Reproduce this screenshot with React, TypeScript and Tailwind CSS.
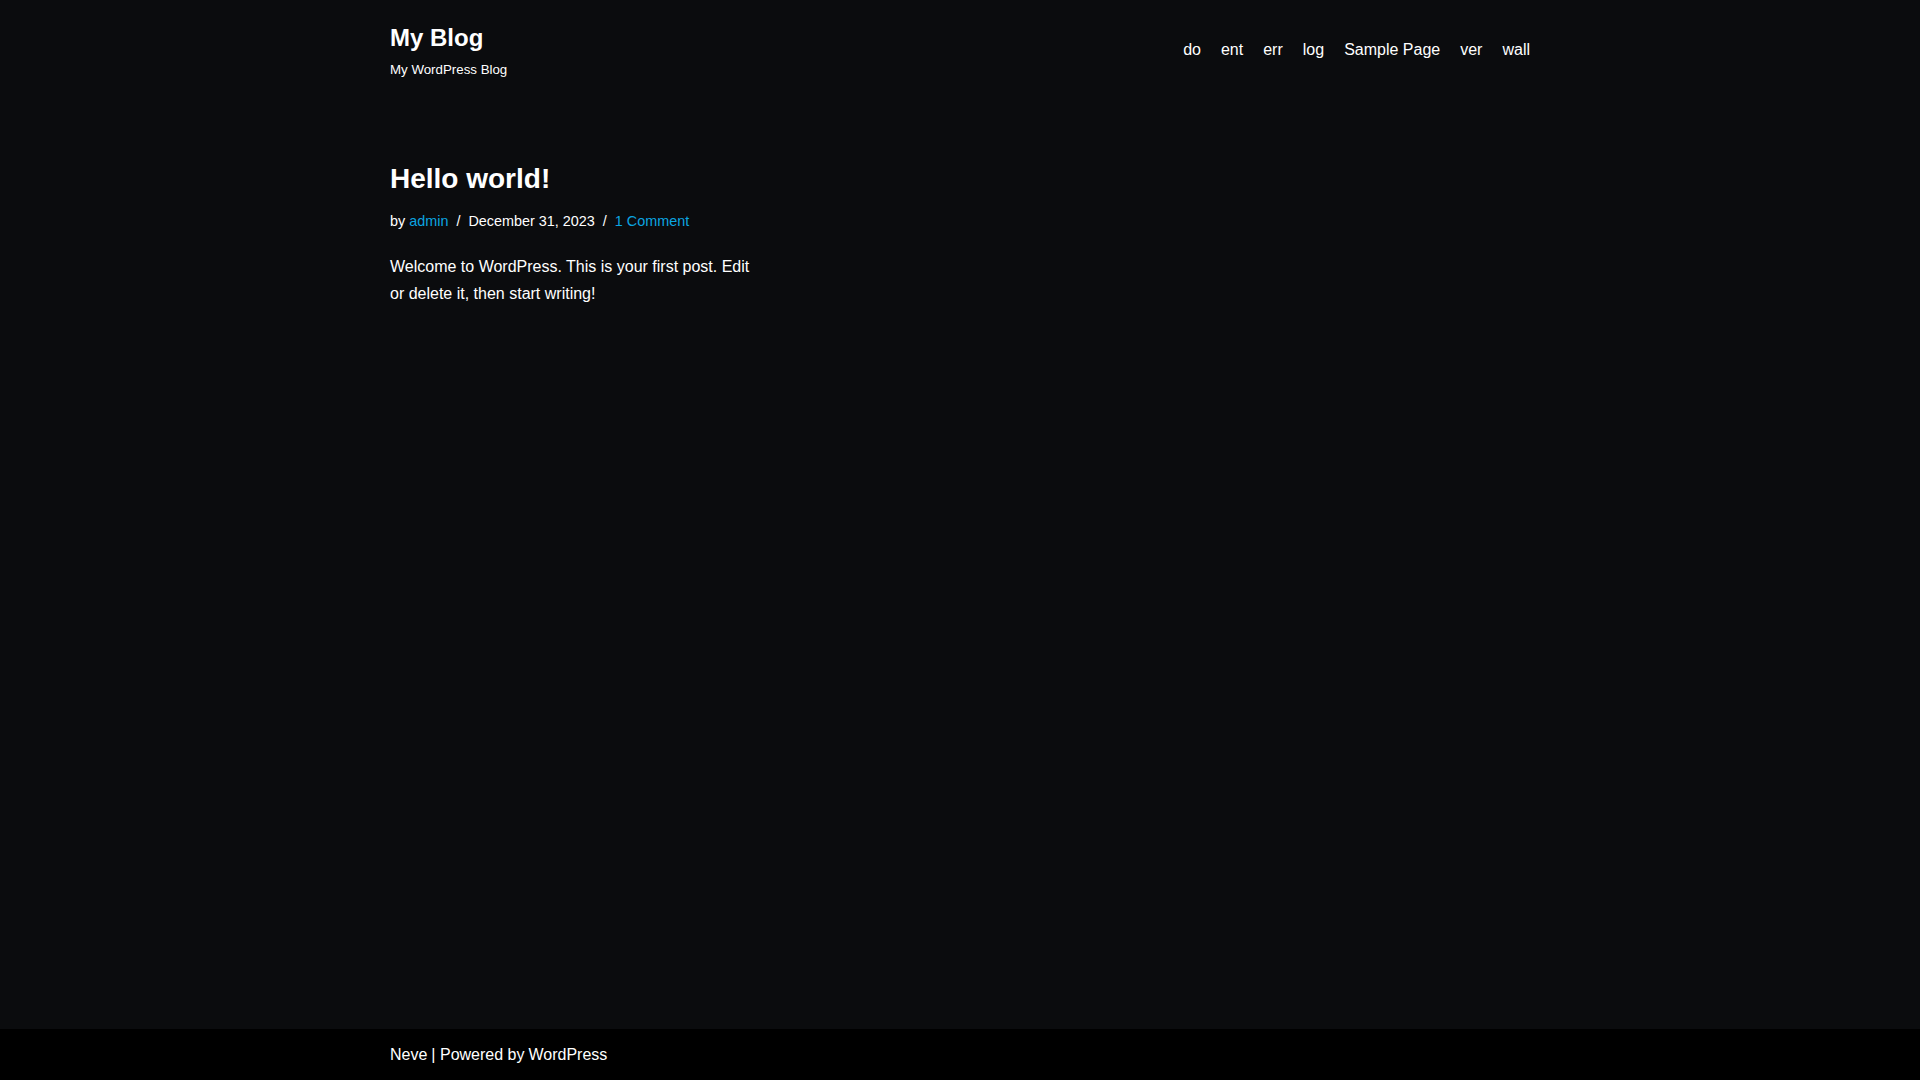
const menu = ['do', 'ent', 'err', 'log', 'Sample Page', 'ver', 'wall']

function Header() {
  return (
    <header className="mx-auto flex w-[1170px] items-center justify-between px-[15px] pt-[23px] pb-[20px]">
      <div>
        <h1 className="text-[24px] leading-[30px] font-bold text-white">My Blog</h1>
        <p className="mt-[7px] text-[13.3px] leading-[20.8px] text-white">My WordPress Blog</p>
      </div>
      <nav className="mb-[4px]">
        <ul className="flex gap-[20px] text-[16px] leading-[24px] text-white">
          {menu.map((item) => (
            <li key={item}>
              <a href="#">{item}</a>
            </li>
          ))}
        </ul>
      </nav>
    </header>
  )
}

function Post() {
  return (
    <article className="w-[370px]">
      <h2 className="text-[28px] leading-[36.4px] font-bold text-white">
        <a href="#">Hello world!</a>
      </h2>
      <div className="mt-[13px] flex items-center text-[14.4px] leading-[23.8px] text-white">
        <span>by</span>
        <a href="#" className="ml-[4px] text-[#0ba5e0]">admin</a>
        <span className="mx-[8px]">/</span>
        <span>December 31, 2023</span>
        <span className="mx-[8px]">/</span>
        <a href="#" className="text-[#0ba5e0]">1 Comment</a>
      </div>
      <p className="mt-[19px] text-[16px] leading-[27.2px] text-white">
        Welcome to WordPress. This is your first post. Edit or delete it, then start writing!
      </p>
    </article>
  )
}

export default function App() {
  return (
    <div className="flex min-h-screen flex-col bg-[#0b0c0e] font-['Liberation_Sans',Arial,sans-serif]">
      <Header />
      <main className="mx-auto w-[1170px] flex-1 px-[15px] pt-[60px]">
        <Post />
      </main>
      <footer className="bg-black">
        <div className="mx-auto flex h-[51px] w-[1170px] items-center px-[15px] text-[16px] text-white">
          <a href="#">Neve</a>
          <span className="ml-[4px]">| Powered by</span>
          <a href="#" className="ml-[4px]">WordPress</a>
        </div>
      </footer>
    </div>
  )
}
